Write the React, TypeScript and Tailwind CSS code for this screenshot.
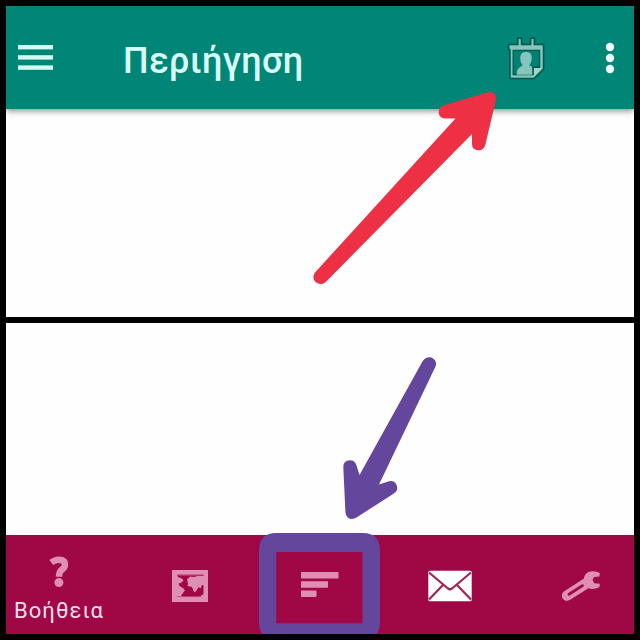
import React from "react";

function MenuIcon() {
  return (
    <svg viewBox="0 0 35 25" className="h-[25px] w-[35px] shrink-0" fill="#d4fbf3">
      <rect width="35" height="4.4" />
      <rect y="10.2" width="35" height="4.4" />
      <rect y="20.4" width="35" height="4.4" />
    </svg>
  );
}

function ContactCalendarIcon() {
  return (
    <svg viewBox="0 0 40 46" className="h-[46px] w-[40px] shrink-0">
      <path
        d="M2.6 9.5H11.8V3.2H15.6V9.5H24.6V3.2H28.4V9.5H37.6V34L28 43.5H3.9V14.5H2.6Z"
        fill="#86c5bb"
        stroke="#005a4f"
        strokeWidth="1.7"
        strokeLinejoin="round"
      />
      <path d="M7.2 15.3H33.6V32H27V39.5H7.2Z" fill="#028072" stroke="#005a4f" strokeWidth="1.3" />
      <path
        d="M10.8 39.8V37.5Q11 33.3 16.6 30.6Q14.2 27.8 14.2 23Q14.4 16.8 20 16.8Q25.6 16.8 25.8 23Q25.8 27.8 23.2 30.6Q26 31.5 26.6 33V39.8Z"
        fill="#86c5bb"
      />
      <path d="M27.8 33H36L28 41.5Z" fill="#a0d5cb" />
      <path d="M27 40V32.3H34" fill="none" stroke="#005a4f" strokeWidth="1.3" />
    </svg>
  );
}

function MoreIcon() {
  return (
    <svg viewBox="0 0 10 32" className="mt-px h-[32px] w-[10px] shrink-0" fill="#effffb">
      <circle cx="5" cy="5" r="4.2" />
      <circle cx="5" cy="16" r="4.2" />
      <circle cx="5" cy="27" r="4.2" />
    </svg>
  );
}

function HelpIcon() {
  return (
    <svg viewBox="0 0 20 32" className="h-[32px] w-[20px]">
      <path
        d="M2.3 6.6Q6 3.7 9.8 3.7Q16 3.7 16 8.4Q16 11.4 12.9 13.6Q10 15.8 10 20.8"
        fill="none"
        stroke="#df8fb3"
        strokeWidth="6.4"
      />
      <circle cx="9.9" cy="26.6" r="4.5" fill="#df8fb3" />
    </svg>
  );
}

function MapIcon() {
  return (
    <svg viewBox="0 0 36 32" className="h-[32px] w-[36px]">
      <rect width="36" height="32" fill="#df8fb3" />
      <path
        d="M5 4.8H31.5V6H25.5L22 7L18 6.5L15 9.5L16 13.5L15.5 16L20 17L21.5 21L23 22.5L24.5 20.5L26.5 17L28.5 18.5L30 15L31.5 15.5V24L27 27H13L9 26L10.5 23.5L13 20.5L11 18L7.5 16L6.5 13.5L9 13L11.5 10.5L10 8.5L6 7Z"
        fill="#a00745"
      />
      <path d="M5 5.2H31M5 26.6H29" fill="none" stroke="#bc4b7d" strokeWidth=".9" />
    </svg>
  );
}

function SortIcon() {
  return (
    <svg viewBox="0 0 38 26" className="h-[26px] w-[38px]" fill="#df8fb3">
      <rect width="37.5" height="6.5" rx=".7" />
      <rect y="9.2" width="27" height="6.5" rx=".7" />
      <rect y="18.4" width="15.5" height="6.5" rx=".7" />
    </svg>
  );
}

function MailIcon() {
  return (
    <svg viewBox="0 0 44 32" className="h-[32px] w-[44px]">
      <rect x=".3" y=".8" width="43.4" height="30.4" rx="1.5" fill="#fff" />
      <path
        d="M1 2.5L20 18.5Q22 20 24 18.5L43 2.5M1 29.5L15 15M43 29.5L29 15"
        fill="none"
        stroke="#a32257"
        strokeWidth="2.2"
      />
    </svg>
  );
}

function WrenchIcon() {
  return (
    <svg viewBox="0 0 40 32" className="h-[32px] w-[40px]">
      <path d="M6 25.6L25 13.5" stroke="#df8fb3" strokeWidth="10.4" strokeLinecap="round" />
      <path
        d="M22.5 11Q23 1.5 31 1.2Q36 1 38.8 3L38.4 6.5L33 7L31.5 10L33.3 13.2L38.8 13.8L38.5 17Q34 19.8 29 18.8L25 17Z"
        fill="#df8fb3"
      />
      <path d="M8 24.2L21.5 15.6" stroke="#a00745" strokeWidth="2.8" strokeLinecap="round" />
    </svg>
  );
}

function Annotations() {
  return (
    <svg viewBox="0 0 640 640" className="pointer-events-none absolute inset-0 h-[640px] w-[640px]">
      <path
        d="M315 272.5L455.5 118.5H446Q439 118.5 438.7 112.5Q438.7 107 444 105.3L487 92.5Q492 91 494.8 94.5Q496.5 97 495.7 101L485.3 145Q484 150.3 478.5 150.3Q472 150 472 144V134L325.5 282.2Q320.5 286 315.5 282Q311.5 277.5 315 272.5Z"
        fill="#ee3044"
      />
      <path
        d="M422.7 361Q426 356 431.5 357.5Q438 361 435.3 367L379 484.5L389 481.3Q394.5 480 396.8 485.5Q398.5 490.5 393.5 493.7L356.5 517.5Q352 520.3 348 517.8Q345.5 516 345.4 512L343.3 467Q343.3 460.2 350 460.2Q355 460.2 356.5 465.5L359.5 475Z"
        fill="#64479d"
      />
      <path
        fillRule="evenodd"
        d="M276 533H363Q380 533 380 551V623Q380 629 377 634H262Q259 629 259 623V551Q259 533 276 533ZM276.3 552V623.3H362.5V552Z"
        fill="#64479d"
      />
    </svg>
  );
}

export default function App() {
  return (
    <div className="relative flex h-[640px] w-[640px] flex-col gap-[6px] overflow-hidden bg-black p-[6px] font-['Roboto','Noto_Sans',sans-serif]">
      <section className="h-[311px] overflow-hidden bg-[#fefefe]">
        <header className="flex h-[103px] items-center bg-[#018576] pl-[12px] pr-[19px] shadow-[0_2px_6px_rgba(0,0,0,0.45)]">
          <MenuIcon />
          <h1 className="ml-[70px] mt-[7px] whitespace-nowrap text-[36px] font-medium leading-none tracking-[0.35px] text-[#d9fff8]">
            Περιήγηση
          </h1>
          <div className="ml-auto flex items-center gap-[59px]">
            <ContactCalendarIcon />
            <MoreIcon />
          </div>
        </header>
      </section>
      <section className="flex h-[311px] flex-col bg-[#fefefe]">
        <div className="flex-1" />
        <nav className="flex h-[99px] bg-[#a00745]">
          <div className="flex w-[106px] flex-col items-center pt-[21px]">
            <HelpIcon />
            <span className="mt-[9px] whitespace-nowrap text-[22px] leading-[28px] tracking-[1.1px] text-[#fadcec]">
              Βοήθεια
            </span>
          </div>
          <div className="flex w-[156px] items-center justify-center pt-[2px]">
            <MapIcon />
          </div>
          <div className="flex w-[104px] items-center justify-center">
            <SortIcon />
          </div>
          <div className="flex w-[156px] items-center justify-center pt-[3px]">
            <MailIcon />
          </div>
          <div className="flex w-[106px] items-center justify-center pt-[2px]">
            <WrenchIcon />
          </div>
        </nav>
      </section>
      <Annotations />
    </div>
  );
}
